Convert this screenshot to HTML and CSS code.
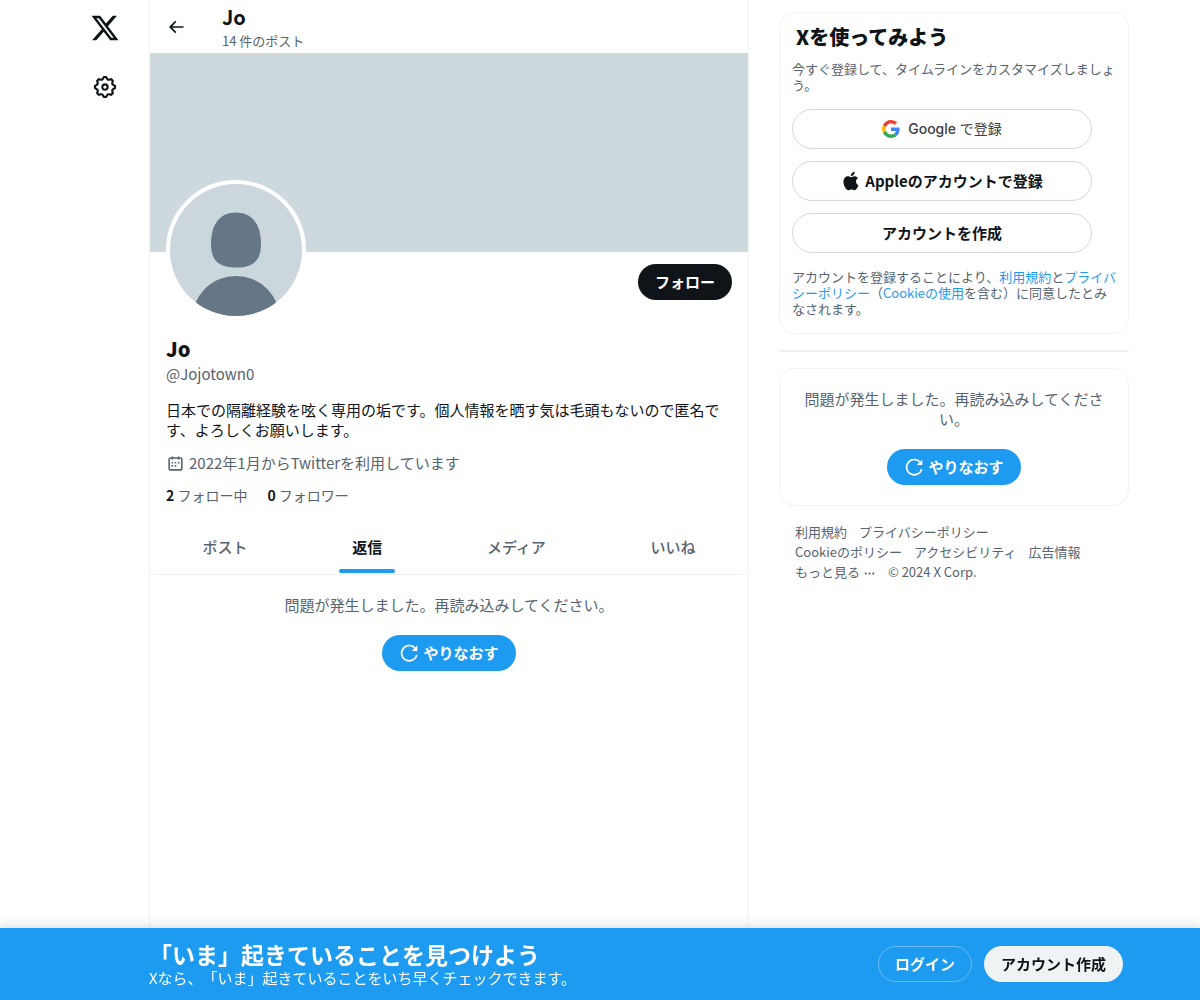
FILE: index.html
```html
<!DOCTYPE html>
<html lang="ja">
<head>
    <meta charset="UTF-8">
    <meta name="viewport" content="width=device-width, initial-scale=1.0">
    <title>Jo (@Jojotown0) / X</title>
    <link rel="stylesheet" href="styles.css">
</head>
<body>
    <svg class="sprite" aria-hidden="true">
        <symbol id="icon-reload" viewBox="0 0 24 24">
            <path d="M21.3 14.2A9.2 9.2 0 1 1 19.6 6.6" fill="none" stroke="currentColor" stroke-width="2"/>
            <path d="M22 3v6.500h-6.500l2.500-2.500z" fill="currentColor"/>
        </symbol>
    </svg>

    <div class="page">
        <nav class="side-nav">
            <a href="#" aria-label="X">
                <svg class="icon-logo" viewBox="0 0 24 24"><path d="M18.244 2.25h3.308l-7.227 8.26 8.502 11.24H16.17l-5.214-6.817L4.99 21.75H1.68l7.73-8.835L1.254 2.25H8.08l4.713 6.231zm-1.161 17.52h1.833L7.084 4.126H5.117z"/></svg>
            </a>
            <a href="#" aria-label="設定">
                <svg class="icon-gear" viewBox="0 0 24 24"><path d="M10.54 1.75h2.92l1.57 2.36c.11.17.32.25.53.21l2.53-.59 2.17 2.17-.58 2.54c-.05.2.04.41.21.53l2.36 1.57v2.92l-2.36 1.57c-.17.12-.26.33-.21.53l.58 2.54-2.17 2.17-2.53-.59c-.21-.04-.42.04-.53.21l-1.57 2.36h-2.92l-1.58-2.36c-.11-.17-.32-.25-.52-.21l-2.54.59-2.17-2.17.58-2.54c.05-.2-.03-.41-.21-.53l-2.35-1.57v-2.92L4.1 8.97c.18-.12.26-.33.21-.53L3.73 5.9 5.9 3.73l2.54.59c.2.04.41-.04.52-.21l1.58-2.36zm1.07 2l-.98 1.47C10.05 6.08 9 6.5 7.99 6.27l-1.46-.34-.6.6.33 1.46c.24 1.01-.18 2.07-1.05 2.64l-1.46.98v.78l1.46.98c.87.57 1.29 1.63 1.05 2.64l-.33 1.46.6.6 1.46-.34c1.01-.23 2.06.19 2.64 1.05l.98 1.47h.78l.97-1.47c.58-.86 1.63-1.28 2.65-1.05l1.45.34.61-.6-.34-1.46c-.23-1.01.18-2.07 1.05-2.64l1.47-.98v-.78l-1.47-.98c-.87-.57-1.28-1.63-1.05-2.64l.34-1.46-.61-.6-1.45.34c-1.02.23-2.07-.19-2.65-1.05l-.97-1.47h-.78zM12 10.5c-.83 0-1.5.67-1.5 1.5s.67 1.5 1.5 1.5c.82 0 1.5-.67 1.5-1.5s-.68-1.5-1.5-1.5zM8.5 12c0-1.93 1.56-3.5 3.5-3.5 1.93 0 3.5 1.57 3.5 3.5s-1.57 3.5-3.5 3.5c-1.94 0-3.5-1.57-3.5-3.5z"/></svg>
            </a>
        </nav>

        <main class="timeline">
            <header class="top-bar">
                <button class="back" aria-label="戻る">
                    <svg viewBox="0 0 24 24"><path d="M7.414 13l5.043 5.04-1.414 1.42L3.586 12l7.457-7.46 1.414 1.42L7.414 11H21v2H7.414z"/></svg>
                </button>
                <div>
                    <h2>Jo</h2>
                    <p>14 件のポスト</p>
                </div>
            </header>

            <div class="banner"></div>

            <section class="profile">
                <div class="profile-top">
                    <div class="avatar">
                        <svg viewBox="0 0 132 132" role="img" aria-label="Jo">
                            <rect width="132" height="132" fill="#ccd6dd"/>
                            <path d="M66 28.500C82 28.500 91 40 91 60C91 77 83 83.500 66 83.500S41 77 41 60C41 40 50 28.500 66 28.500z" fill="#657786"/>
                            <circle cx="66" cy="136" r="44" fill="#657786"/>
                        </svg>
                    </div>
                    <button class="btn btn-dark">フォロー</button>
                </div>
                <h1>Jo</h1>
                <p class="handle">@Jojotown0</p>
                <p class="bio">日本での隔離経験を呟く専用の垢です。個人情報を晒す気は毛頭もないので匿名です、よろしくお願いします。</p>
                <p class="joined">
                    <svg viewBox="0 0 24 24"><path d="M7 4V3h2v1h6V3h2v1h1.5C19.89 4 21 5.12 21 6.5v12c0 1.38-1.11 2.5-2.5 2.5h-13C4.12 21 3 19.88 3 18.5v-12C3 5.12 4.12 4 5.5 4H7zm0 2H5.5c-.27 0-.5.22-.5.5v12c0 .28.23.5.5.5h13c.28 0 .5-.22.5-.5v-12c0-.28-.22-.5-.5-.5H17v1h-2V6H9v1H7V6zm0 6h2v-2H7v2zm0 4h2v-2H7v2zm4-4h2v-2h-2v2zm0 4h2v-2h-2v2zm4-4h2v-2h-2v2z"/></svg>
                    2022年1月からTwitterを利用しています
                </p>
                <div class="counts">
                    <a href="#"><b>2</b> フォロー中</a>
                    <a href="#"><b>0</b> フォロワー</a>
                </div>
            </section>

            <nav class="tabs">
                <a href="#">ポスト</a>
                <a href="#" class="active">返信</a>
                <a href="#">メディア</a>
                <a href="#">いいね</a>
            </nav>

            <div class="error">
                <p>問題が発生しました。再読み込みしてください。</p>
                <button class="btn btn-blue"><svg><use href="#icon-reload"/></svg>やりなおす</button>
            </div>
        </main>

        <aside class="sidebar">
            <section class="card signup">
                <h2>Xを使ってみよう</h2>
                <p>今すぐ登録して、タイムラインをカスタマイズしましょう。</p>
                <button class="btn btn-outline btn-google">
                    <svg viewBox="0 0 48 48"><path fill="#EA4335" d="M24 9.500c3.540 0 6.710 1.220 9.210 3.600l6.850-6.850C35.900 2.380 30.470 0 24 0 14.620 0 6.510 5.380 2.560 13.220l7.980 6.190C12.430 13.720 17.740 9.500 24 9.500z"/><path fill="#4285F4" d="M46.980 24.550c0-1.570-.15-3.090-.38-4.550H24v9.020h12.940c-.58 2.960-2.260 5.480-4.780 7.180l7.730 6c4.510-4.180 7.090-10.360 7.090-17.650z"/><path fill="#FBBC05" d="M10.530 28.590c-.48-1.450-.76-2.990-.76-4.590s.27-3.140.76-4.590l-7.980-6.190C.92 16.460 0 20.120 0 24c0 3.880.92 7.540 2.560 10.780l7.970-6.190z"/><path fill="#34A853" d="M24 48c6.480 0 11.930-2.130 15.890-5.810l-7.730-6c-2.150 1.450-4.920 2.300-8.160 2.300-6.260 0-11.570-4.220-13.470-9.910l-7.980 6.190C6.510 42.620 14.620 48 24 48z"/></svg>
                    <span>Google <span class="ja">で登録</span></span>
                </button>
                <button class="btn btn-outline">
                    <svg viewBox="0 0 24 24"><path d="M16.365 1.43c0 1.14-.493 2.27-1.177 3.08-.744.9-1.99 1.57-2.987 1.57-.12 0-.23-.02-.3-.03-.01-.06-.04-.22-.04-.39 0-1.15.572-2.27 1.206-2.98.804-.94 2.142-1.64 3.248-1.68.03.13.05.28.05.43zm4.565 15.71c-.03.07-.463 1.58-1.518 3.12-.945 1.34-1.94 2.71-3.43 2.71-1.517 0-1.9-.88-3.63-.88-1.698 0-2.302.91-3.67.91-1.377 0-2.332-1.26-3.428-2.8-1.287-1.82-2.323-4.63-2.323-7.28 0-4.28 2.797-6.55 5.552-6.55 1.448 0 2.675.95 3.6.95.865 0 2.222-1.01 3.902-1.01.613 0 2.886.06 4.374 2.19-.13.09-2.383 1.37-2.383 4.19 0 3.26 2.854 4.42 2.955 4.45z"/></svg>
                    Appleのアカウントで登録
                </button>
                <button class="btn btn-outline">アカウントを作成</button>
                <p>アカウントを登録することにより、<a href="#">利用規約</a>と<a href="#">プライバシーポリシー</a>（<a href="#">Cookieの使用</a>を含む）に同意したとみなされます。</p>
            </section>

            <hr>

            <section class="card error">
                <p>問題が発生しました。再読み込みしてください。</p>
                <button class="btn btn-blue"><svg><use href="#icon-reload"/></svg>やりなおす</button>
            </section>

            <footer class="links">
                <a href="#">利用規約</a>
                <a href="#">プライバシーポリシー</a>
                <a href="#">Cookieのポリシー</a>
                <a href="#">アクセシビリティ</a>
                <a href="#">広告情報</a>
                <button>もっと見る
                    <svg viewBox="0 0 24 24"><path d="M3 12c0-1.100.9-2 2-2s2 .9 2 2-.9 2-2 2-2-.9-2-2zm9 2c1.100 0 2-.9 2-2s-.9-2-2-2-2 .9-2 2 .9 2 2 2zm7 0c1.100 0 2-.9 2-2s-.9-2-2-2-2 .9-2 2 .9 2 2 2z"/></svg>
                </button>
                <span>© 2024 X Corp.</span>
            </footer>
        </aside>
    </div>

    <div class="bottom-bar">
        <div class="bottom-inner">
            <div class="bottom-text">
                <h2>「いま」起きていることを見つけよう</h2>
                <p>Xなら、「いま」起きていることをいち早くチェックできます。</p>
            </div>
            <button class="btn btn-login">ログイン</button>
            <button class="btn btn-light">アカウント作成</button>
        </div>
    </div>
</body>
</html>
```
FILE: styles.css
```css
* {
    margin: 0;
    padding: 0;
    box-sizing: border-box;
}

body {
    font-family: "Noto Sans CJK JP", sans-serif;
    font-size: 15px;
    line-height: 20px;
    text-spacing-trim: space-all;
    color: #0f1419;
    background-color: #fff;
}

a {
    color: inherit;
    text-decoration: none;
}

button {
    font: inherit;
    color: inherit;
    background: none;
    border: none;
    cursor: pointer;
}

svg {
    fill: currentColor;
    flex-shrink: 0;
}

.sprite {
    display: none;
}

.page {
    display: flex;
    justify-content: center;
    min-height: 100vh;
    padding-left: 10px;
}

/* left nav */
.side-nav {
    width: 68px;
    display: flex;
    flex-direction: column;
    gap: 7px;
    padding-top: 2px;
}

.side-nav a {
    width: 48px;
    height: 52px;
    display: flex;
    align-items: center;
    justify-content: center;
}

.icon-logo {
    width: 30px;
    height: 30px;
}

.icon-gear {
    width: 26px;
    height: 26px;
}

/* main column */
.timeline {
    flex: 0 1 600px;
    min-width: 0;
    border-left: 1px solid #eff3f4;
    border-right: 1px solid #eff3f4;
}

.top-bar {
    height: 53px;
    display: flex;
    align-items: center;
    gap: 36px;
    padding: 0 16px;
}

.top-bar h2 {
    font-size: 20px;
    line-height: 32px;
}

.top-bar p {
    padding-bottom: 3px;
    font-size: 13px;
    line-height: 16px;
    color: #566370;
}

.back,
.back svg {
    display: block;
    width: 20px;
    height: 20px;
}

.banner {
    aspect-ratio: 3 / 1;
    background-color: #cdd9dd;
}

.profile {
    padding: 12px 16px 15px;
}

.profile-top {
    display: flex;
    justify-content: space-between;
    align-items: flex-start;
    margin-bottom: 16px;
}

.avatar {
    width: 140px;
    height: 140px;
    margin-top: -84px;
    border: 4px solid #fff;
    border-radius: 50%;
    overflow: hidden;
    background-color: #fff;
}

.avatar svg {
    display: block;
}

.profile h1 {
    margin-bottom: 2px;
    font-size: 20px;
    line-height: 26px;
    font-weight: 800;
}

.handle {
    margin-bottom: 16px;
}

.handle,
.joined,
.counts {
    color: #566370;
}

.bio {
    margin-bottom: 13px;
}

.joined {
    display: flex;
    align-items: center;
    gap: 4px;
    margin-bottom: 12px;
}

.joined svg {
    width: 19px;
    height: 19px;
}

.counts {
    display: flex;
    gap: 20px;
    font-size: 14px;
}

.counts b {
    color: #0f1419;
}

.tabs {
    display: flex;
    border-bottom: 1px solid #eff3f4;
}

.tabs a {
    flex: 1 0 auto;
    height: 54px;
    display: flex;
    justify-content: center;
    align-items: center;
    padding: 0 16px;
    font-weight: 500;
    color: #566370;
}

.tabs .active {
    position: relative;
    font-weight: 700;
    color: #0f1419;
}

.tabs .active::after {
    content: "";
    position: absolute;
    bottom: 1px;
    width: 56px;
    height: 4px;
    border-radius: 2px;
    background-color: #1d9bf0;
}

.error {
    display: flex;
    flex-direction: column;
    align-items: center;
    gap: 20px;
    padding: 20px;
    text-align: center;
    color: #566370;
}

/* buttons */
.btn {
    height: 36px;
    display: flex;
    align-items: center;
    justify-content: center;
    gap: 4px;
    padding: 0 16px;
    border: 1px solid transparent;
    border-radius: 20px;
    font-weight: 700;
    white-space: nowrap;
}

.btn svg {
    width: 20px;
    height: 20px;
}

.btn-dark {
    color: #fff;
    background-color: #0f1419;
}

.btn-blue {
    color: #fff;
    background-color: #1d9bf0;
}

.btn-outline {
    width: 300px;
    max-width: 100%;
    height: 40px;
    margin-bottom: 12px;
    border-color: #cfd9de;
}

.btn-google {
    gap: 8px;
    font-family: Inter, "Noto Sans CJK JP", sans-serif;
    font-size: 14px;
    font-weight: 500;
    color: #3c4043;
}

.btn-google .ja {
    font-weight: 400;
}

.btn-google svg {
    width: 18px;
    height: 18px;
}

.btn-login {
    color: #fff;
    border-color: #6bbcf5;
}

.btn-light {
    color: #0f1419;
    background-color: #eff3f4;
}

/* right column */
.sidebar {
    flex: 0 0 350px;
    margin-left: 30px;
    padding-top: 12px;
}

.card {
    border: 1px solid #eff3f4;
    border-radius: 16px;
}

.signup {
    padding: 12px 12px 16px;
}

.signup h2 {
    margin-bottom: 12px;
    padding-left: 4px;
    font-size: 20px;
    line-height: 24px;
    font-weight: 800;
}

.signup p {
    margin-bottom: 16px;
    font-size: 13px;
    line-height: 16px;
    color: #566370;
}

.signup p:last-child {
    margin: 16px 0 0;
}

.signup p a {
    color: #1d9bf0;
}

.sidebar hr {
    height: 2px;
    margin: 16px 0;
    border: none;
    background-color: #eff3f4;
}

.links {
    display: flex;
    flex-wrap: wrap;
    padding: 16px;
    font-size: 13px;
    color: #566370;
}

.links > * {
    padding-right: 12px;
}

.links svg {
    width: 13px;
    height: 13px;
    vertical-align: middle;
}

/* signup bar */
.bottom-bar {
    position: fixed;
    left: 0;
    right: 0;
    bottom: 0;
    padding-left: 72px;
    color: #fff;
    background-color: #1d9bf0;
    box-shadow: 0 0 12px rgba(0, 0, 0, 0.2);
}

.bottom-inner {
    max-width: 974px;
    height: 72px;
    display: flex;
    align-items: center;
    gap: 12px;
    margin: 0 auto;
}

.bottom-text {
    flex: 1;
}

.bottom-inner h2 {
    font-size: 23px;
    line-height: 28px;
}
```
